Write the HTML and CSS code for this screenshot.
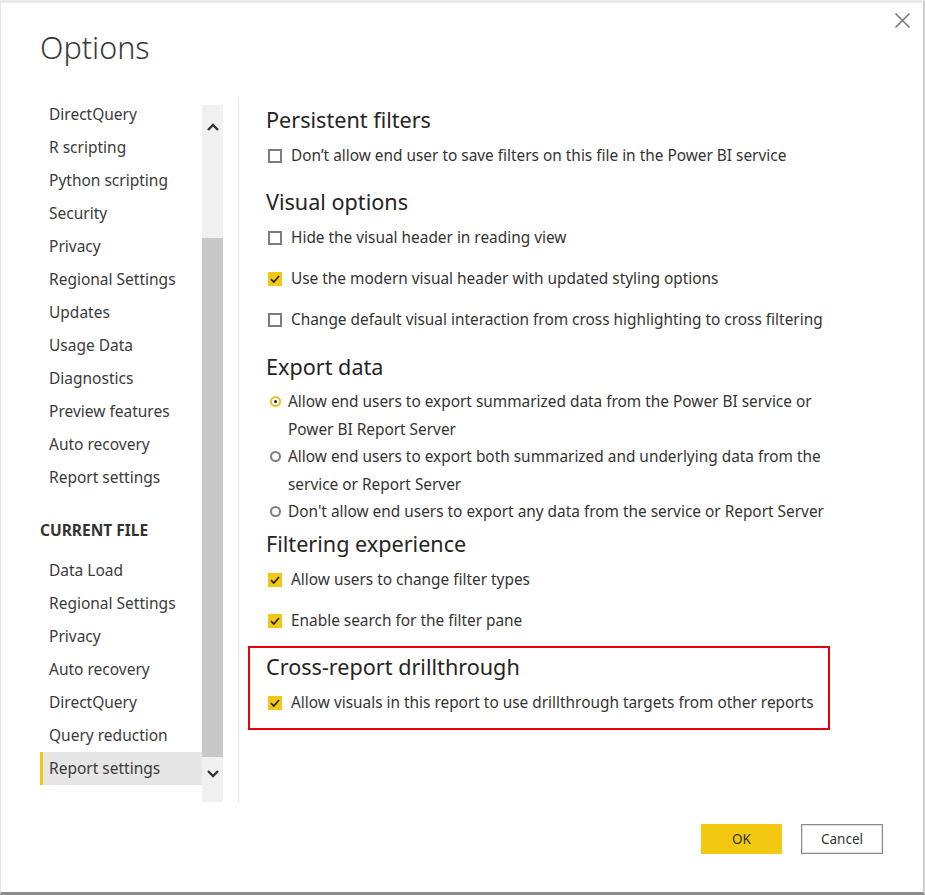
FILE: index.html
```html
<!DOCTYPE html>
<html>
<head>
<meta charset="utf-8">
<link rel="stylesheet" href="styles.css">
</head>
<body>
<div class="dialog">
  <header class="head">
    <h1 class="title">Options</h1>
    <button class="close" aria-label="Close">
      <svg width="17" height="17" viewBox="0 0 17 17"><path d="M1.5 1.5 L15.5 15.5 M15.5 1.5 L1.5 15.5" stroke="#7a7a7a" stroke-width="1.6" fill="none"/></svg>
    </button>
  </header>
  <div class="main">
    <nav class="side">
      <ul class="list">
        <li class="item">DirectQuery</li>
        <li class="item">R scripting</li>
        <li class="item">Python scripting</li>
        <li class="item">Security</li>
        <li class="item">Privacy</li>
        <li class="item">Regional Settings</li>
        <li class="item">Updates</li>
        <li class="item">Usage Data</li>
        <li class="item">Diagnostics</li>
        <li class="item">Preview features</li>
        <li class="item">Auto recovery</li>
        <li class="item">Report settings</li>
        <li class="group">CURRENT FILE</li>
        <li class="item">Data Load</li>
        <li class="item">Regional Settings</li>
        <li class="item">Privacy</li>
        <li class="item">Auto recovery</li>
        <li class="item">DirectQuery</li>
        <li class="item">Query reduction</li>
        <li class="item selected">Report settings</li>
      </ul>
      <div class="scrollbar">
        <div class="arrow up"><svg width="14" height="10" viewBox="0 0 14 10"><path d="M2 8 L7 3 L12 8" stroke="#333" stroke-width="2.4" fill="none"/></svg></div>
        <div class="track"><div class="thumb"></div></div>
        <div class="arrow down"><svg width="14" height="10" viewBox="0 0 14 10"><path d="M2 2 L7 7 L12 2" stroke="#333" stroke-width="2.4" fill="none"/></svg></div>
      </div>
    </nav>
    <div class="divider"></div>
    <section class="content">
      <div class="sec">
        <h2 class="h">Persistent filters</h2>
        <div class="opt"><span class="cb"></span><span>Don’t allow end user to save filters on this file in the Power BI service</span></div>
      </div>
      <div class="sec visual">
        <h2 class="h">Visual options</h2>
        <div class="opt"><span class="cb"></span><span>Hide the visual header in reading view</span></div>
        <div class="opt"><span class="cb on"><svg width="14" height="14" viewBox="0 0 14 14"><path d="M3 7.2 L5.8 10 L11 4" stroke="#222" stroke-width="1.7" fill="none"/></svg></span><span>Use the modern visual header with updated styling options</span></div>
        <div class="opt"><span class="cb"></span><span>Change default visual interaction from cross highlighting to cross filtering</span></div>
      </div>
      <div class="sec export">
        <h2 class="h">Export data</h2>
        <div class="radios">
          <div class="radio"><span class="rd on"></span><span>Allow end users to export summarized data from the Power BI service or<br>Power BI Report Server</span></div>
          <div class="radio"><span class="rd"></span><span>Allow end users to export both summarized and underlying data from the<br>service or Report Server</span></div>
          <div class="radio"><span class="rd"></span><span>Don't allow end users to export any data from the service or Report Server</span></div>
        </div>
      </div>
      <div class="sec filtering">
        <h2 class="h">Filtering experience</h2>
        <div class="opt"><span class="cb on"><svg width="14" height="14" viewBox="0 0 14 14"><path d="M3 7.2 L5.8 10 L11 4" stroke="#222" stroke-width="1.7" fill="none"/></svg></span><span>Allow users to change filter types</span></div>
        <div class="opt"><span class="cb on"><svg width="14" height="14" viewBox="0 0 14 14"><path d="M3 7.2 L5.8 10 L11 4" stroke="#222" stroke-width="1.7" fill="none"/></svg></span><span>Enable search for the filter pane</span></div>
      </div>
      <div class="sec boxed">
        <h2 class="h">Cross-report drillthrough</h2>
        <div class="opt"><span class="cb on"><svg width="14" height="14" viewBox="0 0 14 14"><path d="M3 7.2 L5.8 10 L11 4" stroke="#222" stroke-width="1.7" fill="none"/></svg></span><span>Allow visuals in this report to use drillthrough targets from other reports</span></div>
      </div>
    </section>
  </div>
  <footer class="foot">
    <button class="btn ok">OK</button>
    <button class="btn cancel">Cancel</button>
  </footer>
</div>
</body>
</html>
```
FILE: styles.css
```css
html, body {
  margin: 0;
  padding: 0;
  background: #ffffff;
}
body {
  font-family: "Noto Sans", "Open Sans", sans-serif;
  color: #333333;
}
.dialog {
  width: 925px;
  height: 895px;
  box-sizing: border-box;
  border-top: 3px solid #e9e9e9;
  border-left: 1px solid #e4e4e4;
  border-right: 2px solid #cfcfcf;
  border-bottom: 3px solid #8c8c8c;
  display: flex;
  flex-direction: column;
  background: #fff;
}
.head {
  height: 95px;
  display: flex;
  justify-content: space-between;
  align-items: flex-start;
  padding-left: 39px;
  padding-right: 12px;
}
.title {
  margin: 0;
  margin-top: 24px;
  font-size: 30.5px;
  font-weight: 300;
  line-height: 40px;
  color: #3a3a3a;
}
.close {
  margin-top: 9px;
  border: 0;
  background: transparent;
  padding: 0;
  width: 17px;
  height: 17px;
}
.close svg { display: block; }
.main {
  display: flex;
  height: 704px;
  padding-left: 39px;
}
.side {
  display: flex;
  height: 704px;
}
.list {
  list-style: none;
  margin: 0;
  padding: 0;
  width: 162px;
}
.item {
  height: 33px;
  line-height: 33px;
  font-size: 15.5px;
  padding-left: 6px;
  border-left: 3px solid transparent;
  color: #3b3b3b;
  white-space: nowrap;
}
.item.selected {
  background: #e6e6e6;
  border-left-color: #f2c811;
}
.group {
  margin-top: 20px;
  margin-bottom: 7px;
  height: 33px;
  line-height: 33px;
  font-size: 15.5px;
  font-weight: 700;
  color: #333;
}
.scrollbar {
  width: 21px;
  margin-top: 7px;
  background: #f0f0f0;
  display: flex;
  flex-direction: column;
}
.arrow {
  height: 44px;
  display: flex;
  justify-content: center;
  align-items: center;
}
.arrow.down { height: 44px; align-items: flex-start; padding-top: 11px; box-sizing: border-box; }
.track {
  flex: 1;
  padding-top: 89px;
  display: flex;
  flex-direction: column;
}
.thumb {
  height: 519px;
  background: #c8c8c8;
}
.divider {
  width: 1px;
  background: #e6e6e6;
  margin-left: 15px;
}
.content {
  flex: 1;
  padding-left: 9px;
  padding-top: 7px;
}
.sec {
  padding-left: 18px;
  margin-bottom: 11px;
}
.sec.visual { margin-bottom: 12px; }
.sec.export { margin-bottom: 3.5px; }
.sec.filtering { margin-bottom: 5px; }
.h {
  margin: 0;
  height: 30px;
  line-height: 30px;
  font-size: 21.6px;
  font-weight: 400;
  color: #252423;
  white-space: nowrap;
}
.opt {
  height: 41px;
  display: flex;
  align-items: center;
  font-size: 15.4px;
  color: #333;
  white-space: nowrap;
}
.cb {
  width: 14px;
  height: 14px;
  box-sizing: border-box;
  border: 2px solid #7d7d7d;
  margin-left: 2px;
  margin-right: 9px;
  flex: none;
  position: relative;
}
.cb.on {
  border: 0;
  background: #f2c811;
}
.cb svg { display: block; }
.radios { padding-top: 6px; }
.radio {
  display: flex;
  align-items: flex-start;
  font-size: 15.4px;
  line-height: 27.5px;
  color: #333;
  white-space: nowrap;
}
.rd {
  width: 11px;
  height: 11px;
  box-sizing: border-box;
  border: 2px solid #7d7d7d;
  border-radius: 50%;
  margin-left: 4px;
  margin-right: 7px;
  margin-top: 8px;
  flex: none;
  display: flex;
  align-items: center;
  justify-content: center;
}
.rd.on { border-color: #e8c024; }
.rd.on::after {
  content: "";
  width: 3px;
  height: 3px;
  border-radius: 50%;
  background: #222;
}
.sec.boxed {
  width: 582px;
  box-sizing: border-box;
  border: 2px solid #e8000b;
  padding: 4px 0 5px 16px;
}
.foot {
  display: flex;
  justify-content: flex-end;
  gap: 19px;
  padding-top: 22px;
  padding-right: 40px;
}
.btn {
  width: 82px;
  height: 30px;
  font-family: "Noto Sans", "Open Sans", sans-serif;
  font-size: 13.5px;
  color: #333;
  padding: 0;
}
.ok {
  width: 81px;
  background: #f2c811;
  border: 0;
}
.cancel {
  background: #fff;
  border: 1px solid #8a8a8a;
  box-shadow: inset 0 0 0 1px #e0e0e0;
}
```
